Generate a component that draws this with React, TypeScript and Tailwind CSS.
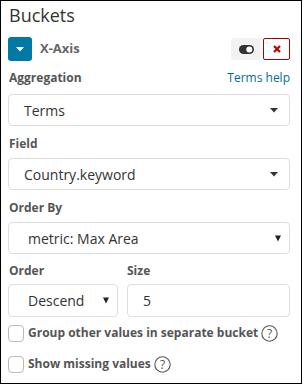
import React from "react";

const Caret = () => (
  <svg width="8" height="5" viewBox="0 0 8 5" className="shrink-0">
    <path d="M0 0 H8 L4 4.5 Z" fill="#333" />
  </svg>
);

const SmallCaret = () => (
  <svg width="6" height="7" viewBox="0 0 6 7" className="shrink-0">
    <path d="M0 0.5 H6 L3 6.5 Z" fill="#222" />
  </svg>
);

const Help = () => (
  <svg width="17" height="17" viewBox="0 0 17 17" className="shrink-0">
    <circle cx="8.5" cy="8.5" r="7.7" fill="none" stroke="#555" strokeWidth="1.1" />
    <text x="8.5" y="12.6" textAnchor="middle" fontSize="12" fontFamily="'Open Sans', sans-serif" fill="#555">?</text>
  </svg>
);

export default function App() {
  return (
    <div
      className="w-[302px] h-[384px] border border-black bg-white pl-[7px] pt-[2px]"
      style={{ fontFamily: "'Open Sans', 'DejaVu Sans', sans-serif" }}
    >
      <div className="w-[282px]">
        <div className="text-[18px] leading-[24px] text-[#333] pl-[1px]">Buckets</div>

        <div className="mt-[10px] h-6 flex items-center justify-between">
          <div className="flex items-center">
            <div className="w-6 h-6 rounded-[3px] bg-[#0079a5] flex items-center justify-center">
              <svg width="8" height="5" viewBox="0 0 8 5">
                <path d="M0 0 H8 L4 4.5 Z" fill="#fff" />
              </svg>
            </div>
            <span className="ml-2 text-[13px] font-bold text-[#666]">X-Axis</span>
          </div>
          <div className="flex items-center">
            <div className="w-[30px] h-[22px] rounded-[3px] bg-[#f2f2f2] flex items-center justify-center">
              <svg width="15" height="9" viewBox="0 0 15 9">
                <rect x="0" y="0" width="15" height="9" rx="4.5" fill="#333" />
                <circle cx="10.3" cy="4.5" r="3" fill="#fff" />
              </svg>
            </div>
            <div className="ml-[2px] w-[27px] h-[22px] rounded-[2px] border border-[#a30000] bg-white flex items-center justify-center">
              <svg width="8" height="8" viewBox="0 0 8 8">
                <path d="M1 1 L7 7 M7 1 L1 7" stroke="#bd0000" strokeWidth="2.2" />
              </svg>
            </div>
          </div>
        </div>

        <div className="mt-[9px] flex items-center justify-between h-4">
          <span className="text-[12px] font-bold text-[#555] pl-[1px]">Aggregation</span>
          <span className="text-[12px] text-[#006e8a]">Terms help</span>
        </div>
        <div className="mt-2 h-8 border border-[#dedede] rounded-[4px] flex items-center justify-between pl-[15px] pr-[11px] text-[14px] text-[#333]">
          <span>Terms</span>
          <Caret />
        </div>

        <div className="mt-[10px] h-4 flex items-center text-[12px] font-bold text-[#555] pl-[1px]">Field</div>
        <div className="mt-[6px] h-8 border border-[#dedede] rounded-[4px] flex items-center justify-between pl-[15px] pr-[11px] text-[14px] text-[#333]">
          <span>Country.keyword</span>
          <Caret />
        </div>

        <div className="mt-[10px] h-4 flex items-center text-[12px] font-bold text-[#555] pl-[1px]">Order By</div>
        <div className="mt-[6px] h-8 border border-[#dedede] rounded-[4px] flex items-center justify-between pl-[19px] pr-[8px] text-[14px] text-[#333]">
          <span>metric: Max Area</span>
          <SmallCaret />
        </div>

        <div className="mt-[9px] h-4 flex items-center text-[12px] font-bold text-[#555]">
          <span className="w-[119px] pl-[1px]">Order</span>
          <span>Size</span>
        </div>
        <div className="mt-[5px] flex gap-[9px]">
          <div className="w-[110px] h-[33px] border border-[#dedede] rounded-[4px] flex items-center justify-between pl-[19px] pr-[8px] text-[14px] text-[#333]">
            <span>Descend</span>
            <SmallCaret />
          </div>
          <div className="flex-1 h-[33px] border border-[#dedede] rounded-[4px] flex items-center pl-[15px] text-[14px] text-[#333]">
            5
          </div>
        </div>

        <div className="mt-[7px] h-[18px] flex items-center">
          <div className="w-[16px] h-[17px] border border-[#bbb] rounded-[4px] bg-white" />
          <span className="ml-[4px] text-[12px] font-bold text-[#555]">Group other values in separate bucket</span>
          <span className="ml-[3px]"><Help /></span>
        </div>
        <div className="mt-[13px] h-[18px] flex items-center">
          <div className="w-[16px] h-[17px] border border-[#bbb] rounded-[4px] bg-white" />
          <span className="ml-[4px] text-[12px] font-bold text-[#555]">Show missing values</span>
          <span className="ml-[3px]"><Help /></span>
        </div>
      </div>
    </div>
  );
}
